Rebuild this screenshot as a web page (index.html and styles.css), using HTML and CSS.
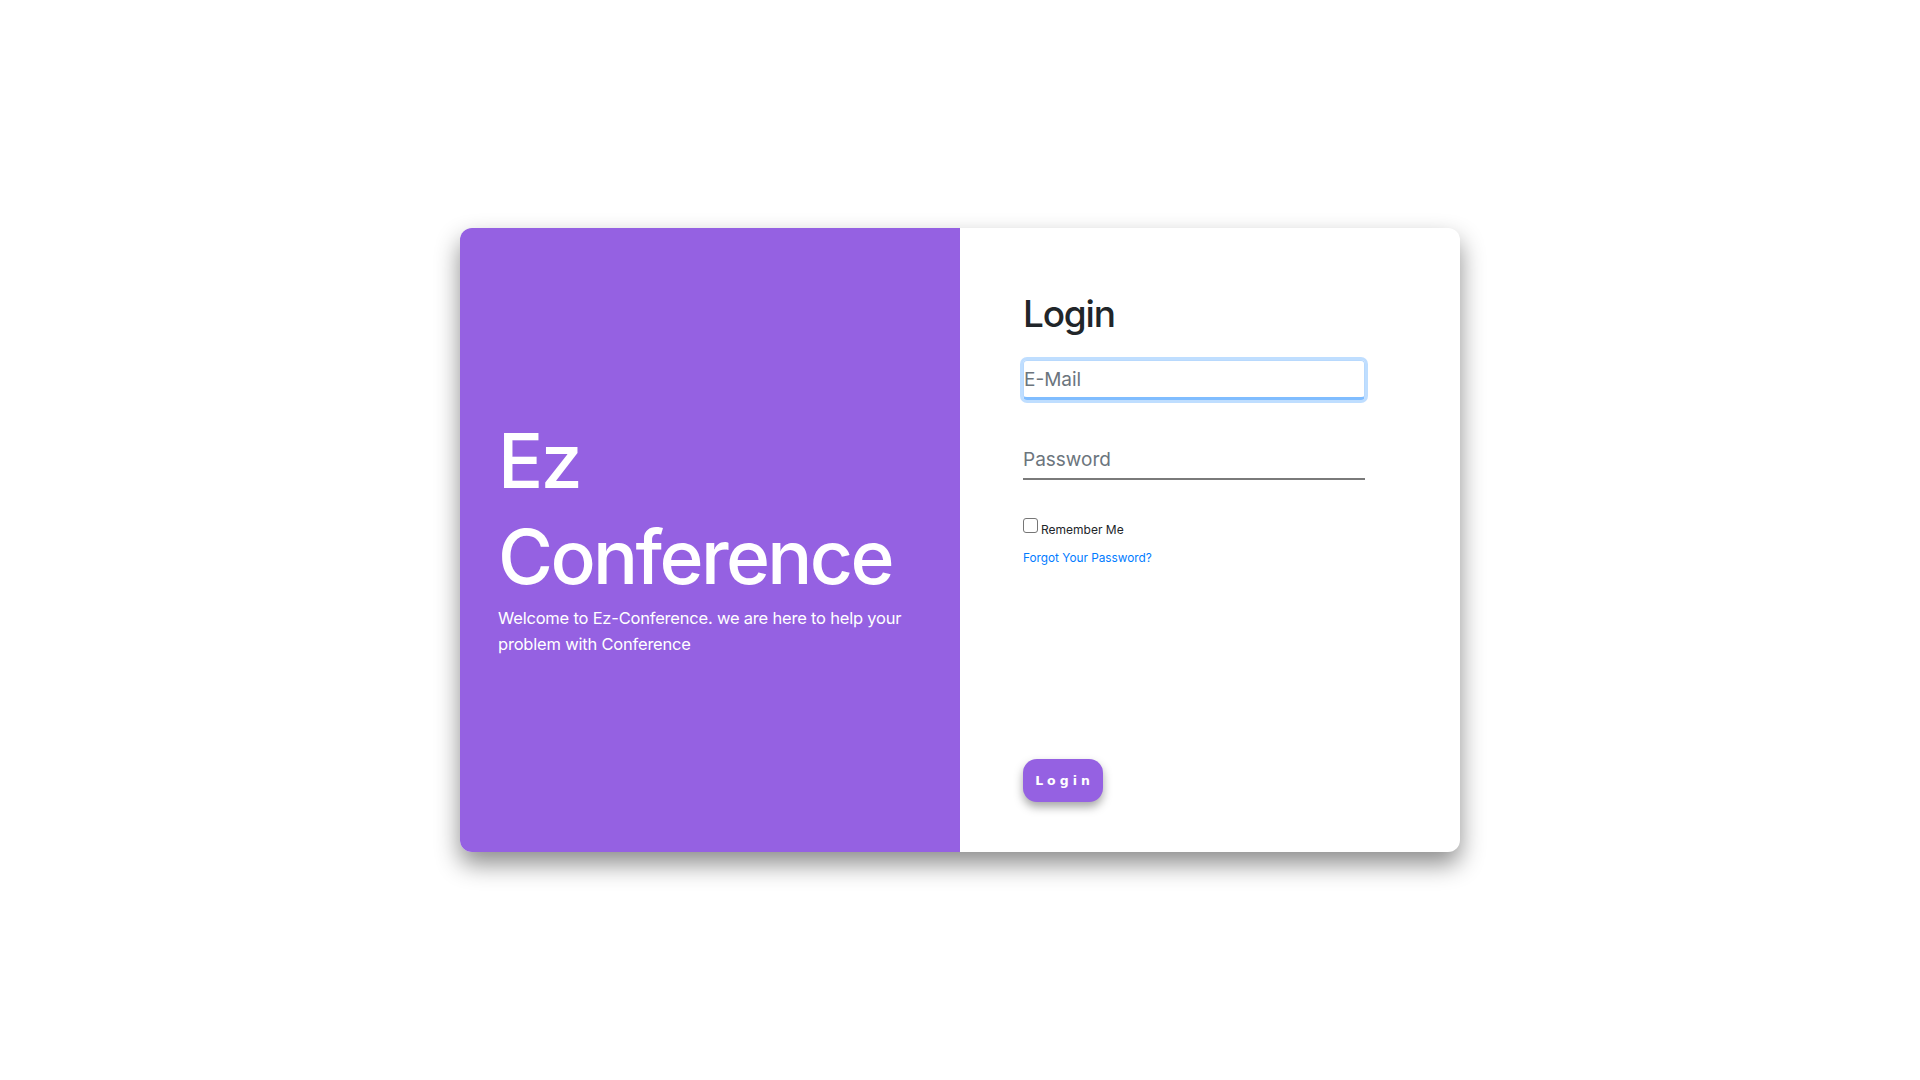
FILE: index.html
```html
<!DOCTYPE html>
<html lang="en">
<head>
<meta charset="utf-8">
<title>Ez Conference - Login</title>
<link rel="stylesheet" href="styles.css">
</head>
<body>
<main class="page">
  <section class="card">
    <div class="brand">
      <h1 class="brand-title">Ez<br>Conference</h1>
      <p class="brand-text">Welcome to Ez-Conference. we are here to help your problem with Conference</p>
    </div>
    <form class="login">
      <h2 class="login-title">Login</h2>
      <input class="field field-focus" type="email" placeholder="E-Mail">
      <input class="field field-pass" type="password" placeholder="Password">
      <label class="remember"><span class="check"></span><span class="remember-text">Remember Me</span></label>
      <a class="forgot" href="#">Forgot Your Password?</a>
      <button class="btn" type="button">Login</button>
    </form>
  </section>
</main>
</body>
</html>
```
FILE: styles.css
```css
* { box-sizing: border-box; }
html, body { margin: 0; padding: 0; }
body {
  background: #ffffff;
  font-family: Inter, "Noto Sans", sans-serif;
}
.page {
  height: 100vh;
  display: flex;
  align-items: center;
  justify-content: center;
}
.card {
  width: 1000px;
  height: 624px;
  display: grid;
  grid-template-columns: 500px 500px;
  border-radius: 12px;
  overflow: hidden;
  background: #fff;
  box-shadow: 0 12px 24px rgba(0, 0, 0, 0.45);
}
.brand {
  background: #9561e2;
  color: #fff;
  padding: 0 38px 10px;
  display: flex;
  flex-direction: column;
  justify-content: center;
}
.brand-title {
  margin: 0;
  font-size: 75px;
  line-height: 96px;
  font-weight: 500;
  letter-spacing: -2.6px;
}
.brand-text {
  margin: 0;
  font-size: 16.5px;
  line-height: 26px;
  font-weight: 400;
  letter-spacing: -0.2px;
}
.login {
  padding: 62px 96px 50px 63px;
  display: flex;
  flex-direction: column;
  align-items: flex-start;
}
.login-title {
  margin: 0 0 22px;
  font-size: 37px;
  line-height: 48px;
  font-weight: 500;
  letter-spacing: -1.2px;
  color: #212529;
}
.field {
  width: 342px;
  height: 40px;
  border: none;
  border-bottom: 2px solid #7a7a7a;
  background: transparent;
  font-family: Inter, "Noto Sans", sans-serif;
  font-size: 19px;
  color: #495057;
  padding: 0;
  outline: none;
}
.field::placeholder { color: #6c757d; }
.field-focus {
  border-bottom: 3px solid #80bdff;
  border-radius: 4px;
  box-shadow: 0 0 0 3px rgba(0, 123, 255, 0.25);
  border-left: 1px solid #b8d9fd;
  border-right: 1px solid #b8d9fd;
  border-top: 1px solid #b8d9fd;
  caret-color: #000;
}
.field-pass {
  margin-top: 40px;
}
.remember {
  margin-top: 38px;
  display: flex;
  align-items: flex-end;
  font-size: 12px;
  color: #212529;
}
.remember-text {
  line-height: 12px;
  position: relative;
  top: 3px;
}
.check {
  width: 15px;
  height: 15px;
  border: 1px solid #767676;
  border-radius: 3px;
  margin-right: 3px;
  background: #fff;
}
.forgot {
  margin-top: 18px;
  font-size: 11.8px;
  color: #007bff;
  text-decoration: none;
}
.btn {
  margin-top: auto;
  width: 80px;
  height: 43px;
  border: none;
  border-radius: 14px;
  background: #9561e2;
  color: #fff;
  font-family: "DejaVu Sans", sans-serif;
  font-weight: 700;
  font-size: 12.5px;
  letter-spacing: 4px;
  padding: 0 0 0 3px;
  box-shadow: 0 5px 10px rgba(0, 0, 0, 0.35);
}
```
